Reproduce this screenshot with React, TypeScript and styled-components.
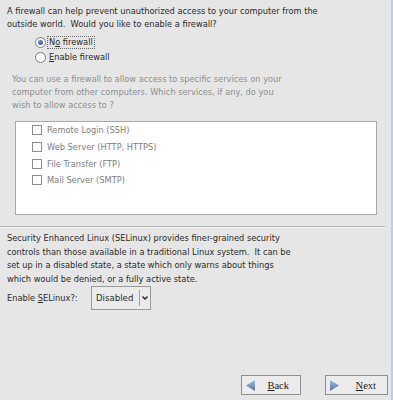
import { createGlobalStyle } from 'styled-components';
import styled from 'styled-components';

const GlobalStyle = createGlobalStyle`
  body {
    margin: 0;
    background: #e6e6e6;
  }
`;

const Frame = styled.div`
  box-sizing: border-box;
  width: 393px;
  height: 400px;
  border-right: 2px solid #bccdec;
  background: #e6e6e6;
  color: #2a2a2a;
  display: flex;
  flex-direction: column;
  font-family: "DejaVu Sans", "Bitstream Vera Sans", sans-serif;
  font-size: 8.25px;
`;

const Paragraph = styled.p<{ $muted?: boolean; $indent?: number; $lineHeight?: number }>`
  margin: 0;
  padding-left: ${(p) => p.$indent ?? 7}px;
  line-height: ${(p) => p.$lineHeight ?? 13}px;
  white-space: pre-wrap;
  color: ${(p) => (p.$muted ? '#8e8e8e' : '#2a2a2a')};
`;

const Intro = styled(Paragraph)`
  padding-top: 5px;
`;

const Hint = styled(Paragraph)`
  margin-top: 8px;
`;

const SelinuxText = styled(Paragraph)`
  margin-top: 4px;
`;

const RadioGroup = styled.div`
  display: flex;
  flex-direction: column;
  margin: 4px 0 0 35px;
`;

const RadioRow = styled.label`
  display: flex;
  align-items: center;
  height: 15px;
  gap: 1px;
`;

const RadioDot = styled.span<{ $checked?: boolean }>`
  box-sizing: border-box;
  width: 11px;
  height: 11px;
  border-radius: 50%;
  border: 1px solid #7a7a7a;
  background: #fff;
  display: flex;
  align-items: center;
  justify-content: center;

  &::after {
    content: '';
    width: 5px;
    height: 5px;
    border-radius: 50%;
    background: ${(p) => (p.$checked ? 'radial-gradient(circle at 35% 35%, #6f8fd0, #2c4a8e)' : 'transparent')};
  }
`;

const RadioLabel = styled.span<{ $focused?: boolean }>`
  border: 1px dotted ${(p) => (p.$focused ? '#6a6a6a' : 'transparent')};
  padding: 0 1px;
  line-height: 11px;
`;

const ServiceList = styled.div`
  box-sizing: border-box;
  width: 362px;
  height: 94px;
  margin: 9px 0 0 15px;
  border: 1px solid #a9a9a9;
  background: #fff;
  padding-left: 16px;
  display: flex;
  flex-direction: column;
`;

const ServiceRow = styled.label`
  display: flex;
  align-items: center;
  gap: 5px;
  height: 16.7px;
  color: #7d7d7d;
`;

const CheckBox = styled.span`
  box-sizing: border-box;
  width: 10px;
  height: 10px;
  border: 1px solid #8c8c8c;
  background: #fff;
`;

const Separator = styled.div`
  width: 385px;
  margin-top: 11px;
  border-top: 1px solid #b4b4b4;
  border-bottom: 1px solid #f3f3f3;
`;

const SelinuxRow = styled.div`
  display: flex;
  align-items: center;
  margin-top: -1px;
  padding-left: 7px;
`;

const SelinuxLabel = styled.span`
  width: 84px;
`;

const Dropdown = styled.div`
  box-sizing: border-box;
  width: 60px;
  height: 24px;
  border: 1px solid #9a9a9a;
  background: #ebebeb;
  display: flex;
  align-items: center;
  font-size: 8.6px;
`;

const DropdownValue = styled.span`
  width: 47px;
  padding-left: 4px;
  box-sizing: border-box;
`;

const DropdownToggle = styled.span`
  flex: 1;
  align-self: stretch;
  margin: 3px 0;
  border-left: 1px solid #a0a0a0;
  display: flex;
  align-items: center;
  justify-content: center;
`;

const Footer = styled.div`
  margin-top: auto;
  display: flex;
  justify-content: flex-end;
  gap: 24px;
  padding: 0 3px 5px 0;
`;

const NavButton = styled.button<{ $width: number }>`
  box-sizing: border-box;
  width: ${(p) => p.$width}px;
  height: 20px;
  border: 1px solid #8e8e8e;
  background: #ececec;
  display: flex;
  align-items: center;
  justify-content: space-between;
  padding: 0 11px 0 4px;
  font-family: "Liberation Serif", "DejaVu Serif", serif;
  font-size: 10.5px;
  color: #222;
`;

const Arrow = ({ dir }: { dir: 'left' | 'right' }) => (
  <svg width="9" height="11" viewBox="0 0 9 11">
    <defs>
      <linearGradient id={`arrow-${dir}`} x1="0" y1="0" x2="0" y2="1">
        <stop offset="0" stopColor="#a9bce0" />
        <stop offset="1" stopColor="#5570a8" />
      </linearGradient>
    </defs>
    <polygon
      points={dir === 'left' ? '9,0 9,11 0,5.5' : '0,0 0,11 9,5.5'}
      fill={`url(#arrow-${dir})`}
    />
  </svg>
);

const Chevron = () => (
  <svg width="6" height="4" viewBox="0 0 6 4">
    <polyline points="0.5,0.5 3,3 5.5,0.5" fill="none" stroke="#222" strokeWidth="1.4" />
  </svg>
);

const services = ['Remote Login (SSH)', 'Web Server (HTTP, HTTPS)', 'File Transfer (FTP)', 'Mail Server (SMTP)'];

export default function App() {
  return (
    <>
      <GlobalStyle />
      <Frame>
        <Intro>
          A firewall can help prevent unauthorized access to your computer from the
          {'\n'}outside world.  Would you like to enable a firewall?
        </Intro>
        <RadioGroup>
          <RadioRow>
            <RadioDot $checked />
            <RadioLabel $focused>
              N<u>o</u> firewall
            </RadioLabel>
          </RadioRow>
          <RadioRow>
            <RadioDot />
            <RadioLabel>
              <u>E</u>nable firewall
            </RadioLabel>
          </RadioRow>
        </RadioGroup>
        <Hint $muted $indent={12}>
          You can use a firewall to allow access to specific services on your
          {'\n'}computer from other computers. Which services, if any, do you
          {'\n'}wish to allow access to ?
        </Hint>
        <ServiceList>
          {services.map((s) => (
            <ServiceRow key={s}>
              <CheckBox />
              {s}
            </ServiceRow>
          ))}
        </ServiceList>
        <Separator />
        <SelinuxText $lineHeight={13.7}>
          Security Enhanced Linux (SELinux) provides finer-grained security
          {'\n'}controls than those available in a traditional Linux system.  It can be
          {'\n'}set up in a disabled state, a state which only warns about things
          {'\n'}which would be denied, or a fully active state.
        </SelinuxText>
        <SelinuxRow>
          <SelinuxLabel>
            Enable <u>S</u>ELinux?:
          </SelinuxLabel>
          <Dropdown>
            <DropdownValue>Disabled</DropdownValue>
            <DropdownToggle>
              <Chevron />
            </DropdownToggle>
          </Dropdown>
        </SelinuxRow>
        <Footer>
          <NavButton $width={60}>
            <Arrow dir="left" />
            <span>
              <u>B</u>ack
            </span>
          </NavButton>
          <NavButton $width={63}>
            <Arrow dir="right" />
            <span>
              <u>N</u>ext
            </span>
          </NavButton>
        </Footer>
      </Frame>
    </>
  );
}
